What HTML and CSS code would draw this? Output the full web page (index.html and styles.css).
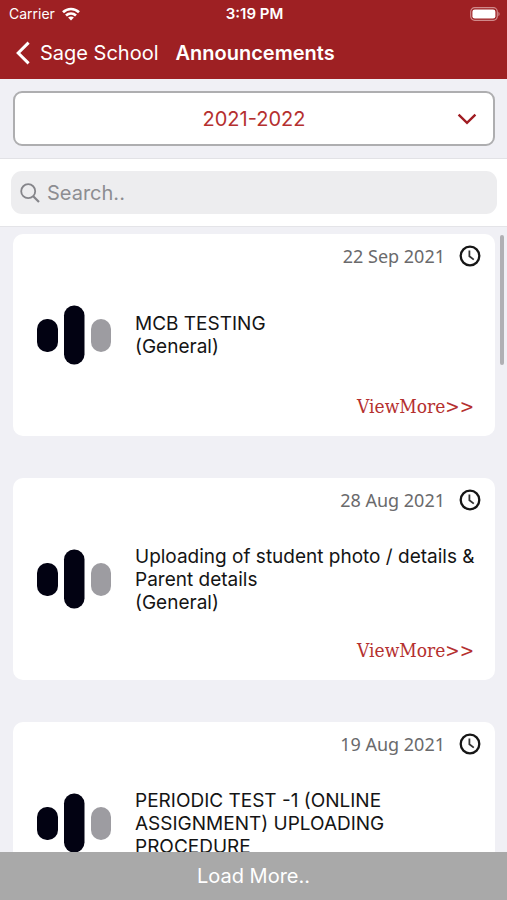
FILE: index.html
```html
<!DOCTYPE html>
<html lang="en">
<head>
<meta charset="utf-8">
<meta name="viewport" content="width=device-width, initial-scale=1">
<title>Announcements</title>
<link rel="stylesheet" href="styles.css">
</head>
<body>
<svg class="sprite" aria-hidden="true">
  <symbol id="clock" viewBox="0 0 22 22"><circle cx="11" cy="11" r="9.3" fill="none" stroke="#161616" stroke-width="2.3"/><path d="M10.4 5.6V11.2L14.8 14.6" fill="none" stroke="#333" stroke-width="1.8"/></symbol>
  <symbol id="logo" viewBox="0 0 74 60"><rect y="14" width="21" height="33" rx="10" fill="#020212"/><rect x="27" y="0.5" width="20.5" height="59" rx="10" fill="#020212"/><rect x="54" y="14" width="20" height="33" rx="10" fill="#9d9ca1"/></symbol>
</svg>
<div class="app">
  <header class="header">
    <div class="status">
      <div class="carrier">
        <span>Carrier</span>
        <svg class="wifi" viewBox="0 0 18 14" aria-hidden="true"><g fill="none" stroke="#fff" stroke-width="2.7"><path d="M1 5.2C5.6 0.9 12.4 0.9 17 5.2"/><path d="M4 8.6C6.9 6 11.1 6 14 8.6"/></g><path d="M6.1 10.6C7.8 9.1 10.2 9.1 11.9 10.6L9 13.6Z" fill="#fff"/></svg>
      </div>
      <span class="time">3:19 PM</span>
      <svg class="battery" viewBox="0 0 30 14" aria-hidden="true"><rect x="0.7" y="0.7" width="26.6" height="12.6" rx="4" fill="none" stroke="#d08a8b" stroke-width="1.2"/><rect x="2.4" y="2.4" width="23" height="9.2" rx="2.4" fill="#fff"/><path d="M28.4 4.8C30 5.6 30 8.4 28.4 9.2Z" fill="#d08a8b"/></svg>
    </div>
    <nav class="nav">
      <a class="back" href="#"><svg viewBox="0 0 14 24" aria-hidden="true"><path d="M12.6 1.6L2.2 12L12.6 22.4" fill="none" stroke="#fff" stroke-width="3"/></svg>Sage School</a>
      <h1 class="title">Announcements</h1>
    </nav>
  </header>
  <div class="filter">
    <div class="year">
      <select aria-label="Academic year"><option>2021-2022</option></select>
      <svg class="chevron" viewBox="0 0 20 12" aria-hidden="true"><path d="M1.6 1.6L10 9.8L18.4 1.6" fill="none" stroke="#a01c22" stroke-width="2.4"/></svg>
    </div>
  </div>
  <div class="search">
    <label class="field">
      <svg viewBox="0 0 20 20" aria-hidden="true"><circle cx="8.2" cy="8.2" r="7" fill="none" stroke="#85858a" stroke-width="1.8"/><path d="M13.2 13.2L19 19" stroke="#85858a" stroke-width="2.2"/></svg>
      <input type="search" placeholder="Search.." aria-label="Search announcements">
    </label>
  </div>
  <main class="list">
    <div class="thumb"></div>
    <article class="card">
      <div class="date"><time datetime="2021-09-22">22 Sep 2021</time><svg aria-hidden="true"><use href="#clock"/></svg></div>
      <div class="body"><svg class="logo" aria-hidden="true"><use href="#logo"/></svg><p>MCB TESTING<br>(General)</p></div>
      <a class="more" href="#">ViewMore&gt;&gt;</a>
    </article>
    <article class="card">
      <div class="date"><time datetime="2021-08-28">28 Aug 2021</time><svg aria-hidden="true"><use href="#clock"/></svg></div>
      <div class="body"><svg class="logo" aria-hidden="true"><use href="#logo"/></svg><p>Uploading of student photo / details &amp; Parent details<br>(General)</p></div>
      <a class="more" href="#">ViewMore&gt;&gt;</a>
    </article>
    <article class="card">
      <div class="date"><time datetime="2021-08-19">19 Aug 2021</time><svg aria-hidden="true"><use href="#clock"/></svg></div>
      <div class="body"><svg class="logo" aria-hidden="true"><use href="#logo"/></svg><p>PERIODIC TEST -1 (ONLINE ASSIGNMENT) UPLOADING PROCEDURE</p></div>
      <a class="more" href="#">ViewMore&gt;&gt;</a>
    </article>
  </main>
  <button class="load" type="button">Load More..</button>
</div>
</body>
</html>
```
FILE: styles.css
```css
* { box-sizing: border-box; }
body { margin: 0; font-family: Inter, sans-serif; background: #f0f0f5; color: #141414; }
a { text-decoration: none; color: inherit; }
.sprite { display: none; }
.app { display: flex; flex-direction: column; height: 100vh; }

.header { background: #9e2023; color: #fff; flex: none; }
.status { display: grid; grid-template-columns: 1fr auto 1fr; align-items: center; height: 27px; padding: 0 7px 0 9px; font-size: 14px; }
.carrier { display: flex; align-items: center; gap: 7px; }
.wifi { width: 18px; height: 14px; }
.time { font-size: 15px; font-weight: 600; }
.battery { width: 30px; height: 14px; justify-self: end; }
.nav { display: flex; align-items: center; gap: 17px; height: 52px; padding: 0 16px; font-size: 20px; }
.back { display: flex; align-items: center; gap: 10px; }
.back svg { width: 14px; height: 24px; }
.title { margin: 0; font-size: 20px; font-weight: 600; }

.filter { padding: 12px 12px 12px 13px; border-bottom: 1px solid #e2e2e6; flex: none; }
.year { position: relative; }
.year select { display: block; appearance: none; width: 100%; height: 55px; padding: 0; border: 2px solid #aeaeb0; border-radius: 9px; background: #fff; color: #b5302f; font: 20px Inter, sans-serif; text-align: center; text-align-last: center; }
.chevron { position: absolute; right: 18px; top: 22px; width: 20px; height: 12px; pointer-events: none; }

.search { padding: 12px 10px 12px 11px; background: #fff; border-bottom: 1px solid #e4e4e8; flex: none; }
.field { display: flex; align-items: center; gap: 7px; height: 43px; padding: 0 9px; border-radius: 11px; background: #ededef; }
.field svg { width: 20px; height: 20px; flex: none; }
.field input { flex: 1; min-width: 0; padding: 0; border: 0; outline: 0; background: none; font: 20px Inter, sans-serif; }
.field input::placeholder { color: #8d8d92; opacity: 1; }

.list { position: relative; display: flex; flex-direction: column; gap: 42px; flex: 1; min-height: 0; padding: 7px 12px 7px 13px; overflow: auto; scrollbar-width: none; }
.thumb { position: absolute; top: 8px; right: 3px; width: 4px; height: 130px; border-radius: 2px; background: #b0b0b4; }
.card { display: grid; grid-template-rows: 44px 1fr 44px; flex: none; min-height: 202px; padding: 0 14px 0 24px; border-radius: 10px; background: #fff; }
.date { display: flex; align-items: center; justify-content: flex-end; gap: 14px; color: #6a6a6c; font: 18px "Noto Sans", sans-serif; }
.date svg { width: 22px; height: 22px; }
.body { display: flex; align-items: center; gap: 24px; }
.logo { width: 74px; height: 60px; flex: none; }
.body p { margin: 0; font-size: 19px; line-height: 23px; }
.more { justify-self: end; padding: 3px 7px 0; color: #b5302f; font: 19px "DejaVu Serif Condensed", "DejaVu Serif", serif; }

.load { flex: none; height: 48px; border: 0; padding: 0; background: #a9a9a9; color: #fff; font: 20px Inter, sans-serif; }
```
